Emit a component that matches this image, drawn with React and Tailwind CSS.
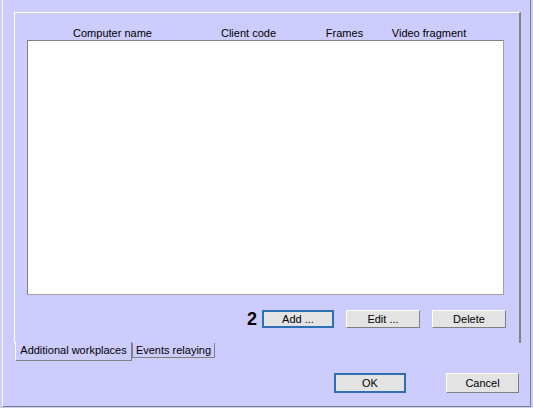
export default function App() {
  const font = { fontFamily: '"Liberation Sans", Arial, sans-serif' };
  const btn =
    'h-[18px] flex items-center justify-center text-[11px] text-black bg-[#e3e3e3] border border-t-white border-l-white border-r-[#808080] border-b-[#808080]';
  const btnActive =
    'flex items-center justify-center text-[11px] text-black bg-[#e3e3e3] border-2 border-[#2f6fb5]';

  return (
    <div className="w-[533px] h-[408px] bg-[#ccccff] flex pl-[2px] pr-[2px] pb-[1px]" style={font}>
      <div className="flex-1 flex flex-col border-l border-r border-b border-l-white border-r-[#808080] border-b-[#808080] pt-[12px] pl-[11px]">
        {/* tab page */}
        <div className="w-[507px] h-[331px] flex flex-col border-t border-l border-r-2 border-t-white border-l-white border-r-[#808080] pl-[12px] pr-[13px]">
          <div className="h-[27px] flex items-end pb-[1px] text-[11px] text-black leading-none">
            <div className="w-[171px] text-center">Computer name</div>
            <div className="w-[101px] text-center">Client code</div>
            <div className="w-[91px] text-center">Frames</div>
            <div className="w-[78px] text-center">Video fragment</div>
          </div>
          <div className="w-[477px] h-[255px] bg-white border border-t-[#808080] border-l-[#808080] border-r-[#a0a0a0] border-b-[#a0a0a0]" />
          <div className="flex items-center justify-end mt-[15px] gap-[12px]">
            <div className="flex items-center gap-[5px]">
              <span className="text-[18px] font-bold leading-none text-black">2</span>
              <div className={`${btnActive} w-[72px] h-[18px]`}>Add ...</div>
            </div>
            <div className={`${btn} w-[74px]`}>Edit ...</div>
            <div className={`${btn} w-[74px]`}>Delete</div>
          </div>
        </div>
        {/* tabs */}
        <div className="flex items-start text-[11px] text-black leading-none">
          <div className="w-[117px] h-[19px] flex items-center justify-center border-l border-r border-b border-l-white border-r-[#808080] border-b-[#808080] ml-[1px] -mt-[1px] bg-[#ccccff] pb-[1px]">
            Additional workplaces
          </div>
          <div className="w-[83px] h-[15px] flex items-center justify-center border-r border-b border-l border-l-[#808080] border-r-[#808080] border-b-[#808080]">
            Events relaying
          </div>
        </div>
        <div className="flex justify-end gap-[40px] mt-[12px] pr-[11px]">
          <div className={`${btnActive} w-[72px] h-[20px]`}>OK</div>
          <div className={`${btn} w-[73px] h-[20px]`}>Cancel</div>
        </div>
      </div>
    </div>
  );
}
